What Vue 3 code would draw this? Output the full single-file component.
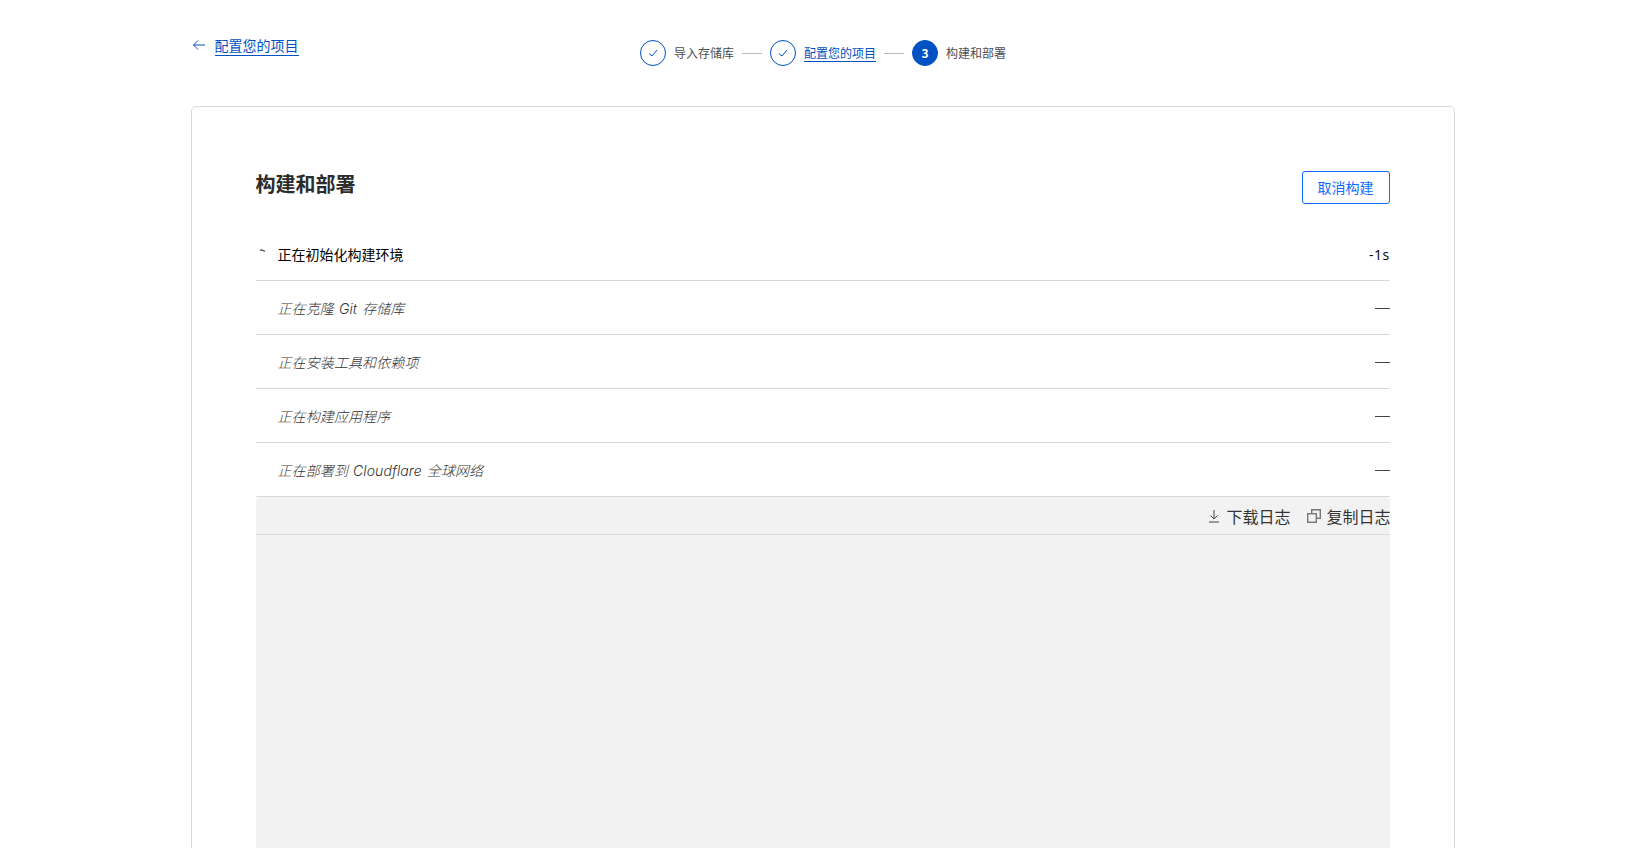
<script setup>
const rows = [
  { label: '正在克隆 Git 存储库' },
  { label: '正在安装工具和依赖项' },
  { label: '正在构建应用程序' },
  { label: '正在部署到 Cloudflare 全球网络' },
]
</script>

<template>
  <div class="page">
    <header class="top">
      <a class="back">
        <svg class="back-icon" width="14" height="12" viewBox="0 0 14 12" fill="none" stroke="#0051c3" stroke-width="1">
          <path d="M13 6H1.5M6 1.5 1.5 6 6 10.5" />
        </svg>
        <span class="back-text">配置您的项目</span>
      </a>
      <ol class="steps">
        <li class="step">
          <span class="circle">
            <svg width="12" height="12" viewBox="0 0 12 12" fill="none" stroke="#0051c3" stroke-width="1"><path d="M2 6.5 5 9l5-6" /></svg>
          </span>
          <span class="step-text">导入存储库</span>
        </li>
        <li class="sep"></li>
        <li class="step">
          <span class="circle">
            <svg width="12" height="12" viewBox="0 0 12 12" fill="none" stroke="#0051c3" stroke-width="1"><path d="M2 6.5 5 9l5-6" /></svg>
          </span>
          <span class="step-text active">配置您的项目</span>
        </li>
        <li class="sep"></li>
        <li class="step">
          <span class="circle filled">3</span>
          <span class="step-text">构建和部署</span>
        </li>
      </ol>
      <div></div>
    </header>

    <main class="card">
      <div class="card-head">
        <h2 class="title">构建和部署</h2>
        <button class="cancel">取消构建</button>
      </div>

      <div class="row current">
        <span class="spinner"><svg width="8" height="4" viewBox="0 0 8 4" fill="none" stroke="#666" stroke-width="1.4"><path d="M1 1.200 3 1l3 1.400" /></svg></span>
        <span class="label">正在初始化构建环境</span>
        <span class="time">-1s</span>
      </div>
      <div v-for="r in rows" :key="r.label" class="row pending">
        <span class="spinner"></span>
        <span class="label">{{ r.label }}</span>
        <span class="dash"></span>
      </div>

      <section class="log">
        <div class="log-bar">
          <span class="tool">
            <svg width="12" height="14" viewBox="0 0 12 14" fill="none" stroke="#444" stroke-width="1"><path d="M6 1v9M2.500 6.500 6 10l3.500-3.500M1 13h10" /></svg>
            下载日志
          </span>
          <span class="tool">
            <svg width="14" height="14" viewBox="0 0 14 14" fill="none" stroke="#777" stroke-width="1.400"><rect x="0.700" y="4.700" width="8.600" height="8.600" /><path d="M4.700 4.700V0.700h8.600v8.600H9.300" /></svg>
            复制日志
          </span>
        </div>
        <div class="log-body"></div>
      </section>
    </main>
  </div>
</template>

<style>
html, body { margin: 0; height: 100%; overflow: hidden; background: #fff; }
</style>

<style scoped>
.page {
  width: 1264px;
  margin: 0 auto;
  height: 848px;
  overflow: hidden;
  font-family: "Noto Sans CJK SC", "Noto Sans", sans-serif;
  color: #222;
}
.top {
  display: grid;
  grid-template-columns: 1fr auto 1fr;
  height: 106px;
  box-sizing: border-box;
}
.back {
  display: flex;
  align-items: flex-start;
  gap: 9px;
  padding: 36px 0 0 1px;
  color: #0051c3;
  font-size: 14px;
  line-height: 19px;
}
.back-icon { margin-top: 3px; }
.back-text { border-bottom: 1px solid #0051c3; }
.steps {
  list-style: none;
  margin: 0;
  padding: 40px 0 0 1px;
  display: flex;
  align-items: flex-start;
  gap: 8px;
}
.step { display: flex; align-items: center; gap: 8px; height: 26px; }
.circle {
  width: 26px;
  height: 26px;
  box-sizing: border-box;
  border: 1px solid #0051c3;
  border-radius: 50%;
  display: flex;
  align-items: center;
  justify-content: center;
}
.circle.filled {
  background: #0051c3;
  color: #fff;
  font-size: 12px;
  font-weight: 700;
  padding-bottom: 2px;
}
.step-text { font-size: 12px; line-height: 16px; color: #4d4d4d; }
.step-text.active { color: #0051c3; border-bottom: 1px solid #0051c3; }
.sep { width: 20px; height: 1px; margin: 13px 0 0; background: #b8b8b8; }
.card {
  border: 1px solid #d9d9d9;
  border-radius: 5px 5px 0 0;
  padding: 64px 64px 0;
  height: 900px;
  box-sizing: border-box;
}
.card-head {
  display: flex;
  justify-content: space-between;
  align-items: flex-start;
  height: 56px;
}
.title {
  margin: 0;
  font-size: 20px;
  line-height: 26px;
  font-weight: 700;
  color: #2b2b2b;
}
.cancel {
  width: 88px;
  height: 33px;
  box-sizing: border-box;
  padding: 0 0 2px;
  background: #fff;
  border: 1px solid #0a6cff;
  border-radius: 3px;
  color: #0a6cff;
  font: 14px/1 "Noto Sans CJK SC", "Noto Sans", sans-serif;
}
.row {
  display: flex;
  align-items: center;
  height: 54px;
  box-sizing: border-box;
  border-bottom: 1px solid #d9d9d9;
  font-size: 14px;
  overflow: hidden;
}
.spinner {
  width: 22px;
  flex: none;
  display: flex;
  padding: 0 0 6px 3px;
  box-sizing: border-box;
}
.label { flex: 1; }
.current { color: #000; }
.pending { color: #333; }
.pending .label {
  font-family: "Inter", "Noto Sans CJK SC", sans-serif;
  font-style: italic;
  font-weight: 300;
  word-spacing: 1px;
  letter-spacing: 0.1px;
}
.time {
  white-space: nowrap;
  padding-top: 1px;
  letter-spacing: 0.4px;
  font-family: "Open Sans", "Noto Sans CJK SC", sans-serif;
}
.dash { width: 15px; height: 1px; margin-top: 2px; background: #444; }
.log {
  background: #f2f2f2;
  border-radius: 5px 5px 0 0;
  height: 600px;
  overflow: hidden;
}
.log-bar {
  height: 38px;
  box-sizing: border-box;
  border-bottom: 1px solid #d9d9d9;
  display: flex;
  justify-content: flex-end;
  align-items: center;
  gap: 17px;
  font-size: 16px;
  color: #333;
  white-space: nowrap;
  margin-right: -1px;
}
.tool { display: inline-flex; align-items: center; gap: 6px; }
.tool:last-child { gap: 5px; }
</style>
